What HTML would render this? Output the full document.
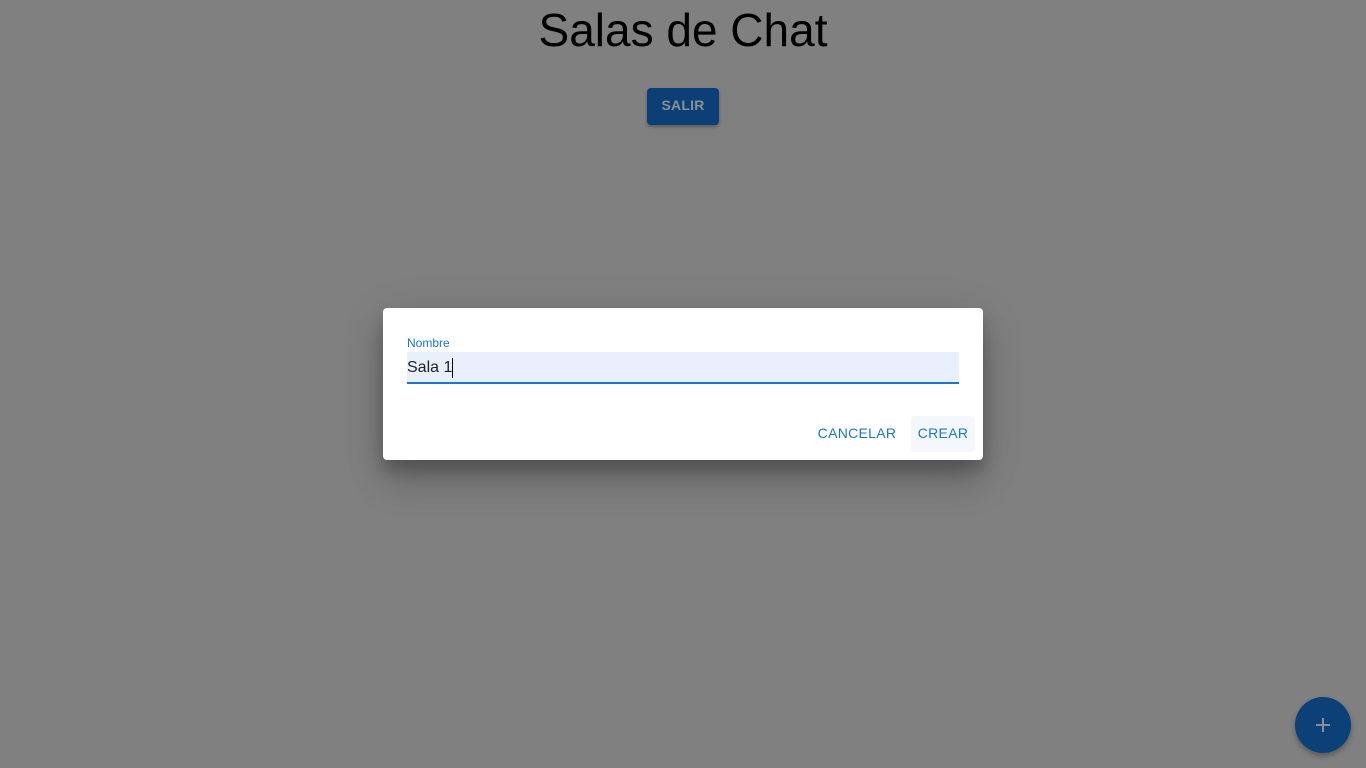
<!DOCTYPE html>
<html><head><meta charset="utf-8"><style>
*{margin:0;padding:0;box-sizing:border-box}
body{width:1366px;height:768px;background:#808080;font-family:"Liberation Sans",sans-serif;position:relative;overflow:hidden}
h1{position:absolute;top:3px;left:0;width:1366px;text-align:center;font-weight:400;font-size:46px;color:#000;line-height:54px}
.salir{position:absolute;left:647px;top:88px;width:72px;height:37px;background:#0c3f76;border-radius:4px;color:#8a8f96;font-weight:bold;font-size:14px;text-align:center;line-height:35px;letter-spacing:.2px;box-shadow:0 2px 3px rgba(0,0,0,.3)}
.fab{position:absolute;left:1295px;top:697px;width:56px;height:56px;border-radius:50%;background:#0c4178;box-shadow:0 3px 6px rgba(0,0,0,.3)}
.fab:before{content:"";position:absolute;left:21px;top:27px;width:14px;height:2px;background:#8a8f96}
.fab:after{content:"";position:absolute;left:27px;top:21px;width:2px;height:14px;background:#8a8f96}
.dlg{position:absolute;left:383px;top:308px;width:600px;height:152px;background:#fff;border-radius:4px;box-shadow:0 11px 15px rgba(0,0,0,.2),0 24px 38px rgba(0,0,0,.14),0 9px 46px rgba(0,0,0,.12)}
.lbl{position:absolute;left:24px;top:28px;font-size:12px;color:#1976d2}
.inp{position:absolute;left:24px;top:44px;width:552px;height:32px;background:#e8f0fe;border-bottom:2px solid #1976d2;font-size:16px;color:#222;line-height:32px}
.cur{display:inline-block;width:1px;height:20px;background:#000;vertical-align:middle;margin-left:0}
.btn{position:absolute;top:108px;height:36px;line-height:35px;font-size:14px;color:#1976d2;letter-spacing:.3px;font-weight:500}
</style></head><body>
<h1>Salas de Chat</h1>
<div class="salir">SALIR</div>
<div class="fab"></div>
<div class="dlg">
<div class="lbl">Nombre</div>
<div class="inp">Sala 1<span class="cur"></span></div>
<div class="btn" style="left:430px;width:88px;text-align:center">CANCELAR</div>
<div class="btn" style="left:528px;width:64px;text-align:center;background:#f4f8fd;border-radius:4px">CREAR</div>
</div>
</body></html>
